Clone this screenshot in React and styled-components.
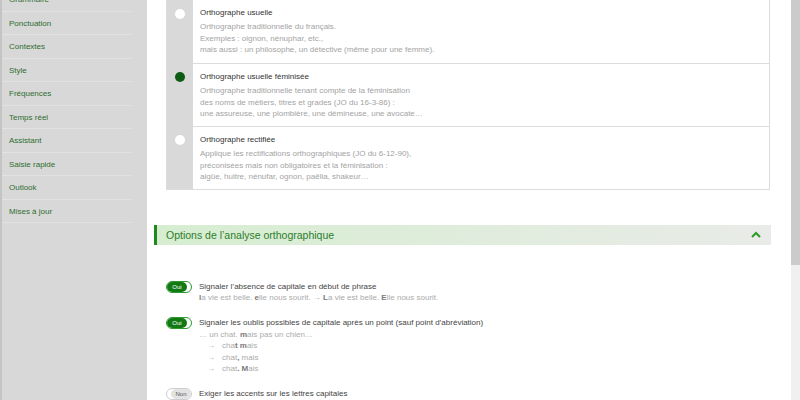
import React from "react";
import styled, { createGlobalStyle } from "styled-components";

const GlobalStyle = createGlobalStyle`
  html, body {
    margin: 0;
    padding: 0;
    background: #fff;
    font-family: "Liberation Sans", Arial, sans-serif;
  }
`;

const menu = [
  "Grammaire",
  "Ponctuation",
  "Contextes",
  "Style",
  "Fréquences",
  "Temps réel",
  "Assistant",
  "Saisie rapide",
  "Outlook",
  "Mises à jour",
];

const choices = [
  {
    title: "Orthographe usuelle",
    lines: [
      "Orthographe traditionnelle du français.",
      "Exemples : oignon, nénuphar, etc.,",
      "mais aussi : un philosophe, un détective (même pour une femme).",
    ],
  },
  {
    title: "Orthographe usuelle féminisée",
    checked: true,
    lines: [
      "Orthographe traditionnelle tenant compte de la féminisation",
      "des noms de métiers, titres et grades (JO du 16-3-86) :",
      "une assureuse, une plombière, une démineuse, une avocate…",
    ],
  },
  {
    title: "Orthographe rectifiée",
    lines: [
      "Applique les rectifications orthographiques (JO du 6-12-90),",
      "préconisées mais non obligatoires et la féminisation :",
      "aigüe, huitre, nénufar, ognon, paëlia, shakeur…",
    ],
  },
];

const Page = styled.div`
  display: flex;
  width: 800px;
  height: 400px;
  overflow: hidden;
`;

const Sidebar = styled.nav`
  width: 147px;
  flex-shrink: 0;
  background: #d8d8d8;
  border-left: 2px solid #c4c4c4;
  box-sizing: border-box;
  margin-top: -12px;
`;

const MenuItem = styled.div`
  height: 23.5px;
  line-height: 23.5px;
  padding-left: 7px;
  margin-right: 16px;
  font-size: 8px;
  color: #2f6d2f;
  border-bottom: 1px solid #e2e2e2;
  box-sizing: border-box;
`;

const Main = styled.main`
  flex: 1;
  display: flex;
  flex-direction: column;
`;

const Card = styled.div`
  margin: -1px 21px 0 19px;
  border: 1px solid #dcdcdc;
  display: flex;
  flex-direction: column;
`;

const ChoiceRow = styled.div`
  display: flex;
  height: 63px;
`;

const RadioCell = styled.div`
  width: 26px;
  flex-shrink: 0;
  background: #d9d9d9;
  display: flex;
  justify-content: center;
  padding-top: 9px;
  box-sizing: border-box;
`;

const Radio = styled.span`
  width: 10px;
  height: 10px;
  border-radius: 50%;
  background: ${(p) => (p.checked ? "#0d5c12" : "#fff")};
`;

const ChoiceText = styled.div`
  flex: 1;
  padding: 7px 0 0 7px;
  border-top: ${(p) => (p.first ? "none" : "1px solid #dcdcdc")};
  font-size: 8px;
  line-height: 11.5px;
`;

const ChoiceTitle = styled.div`
  color: #333;
  margin-bottom: 2.5px;
`;

const Muted = styled.div`
  color: #a3a3a3;
`;

const SectionHeader = styled.div`
  margin: 35px 20px 0 7px;
  height: 22px;
  display: flex;
  align-items: center;
  justify-content: space-between;
  padding: 0 10px 0 9px;
  border-left: 3px solid #1c8a1c;
  background: linear-gradient(to right, #d6edd0, #e9ebe8);
  color: #2b7d2b;
  font-size: 10.5px;
`;

const OptionList = styled.div`
  margin: 36px 0 0 19px;
  display: flex;
  flex-direction: column;
  gap: 13.5px;
`;

const Option = styled.div`
  display: flex;
  align-items: flex-start;
  gap: 7px;
  font-size: 8px;
  line-height: 11.5px;
`;

const Toggle = styled.span`
  width: 26px;
  height: 12px;
  flex-shrink: 0;
  box-sizing: border-box;
  border-radius: 6px;
  display: flex;
  flex-direction: ${(p) => (p.on ? "row" : "row-reverse")};
  background: #fff;
  border: 1px solid ${(p) => (p.on ? "#2f9a2f" : "#cfcfcf")};
`;

const ToggleLabel = styled.span`
  width: 20px;
  border-radius: 6px;
  background: ${(p) => (p.on ? "#137a13" : "#e3e3e3")};
  color: ${(p) => (p.on ? "#fff" : "#555")};
  font-size: 6px;
  line-height: 10px;
  text-align: center;
`;

const OptionTitle = styled.div`
  color: #444;
`;

const Sub = styled.div`
  color: #ababab;
  padding-left: ${(p) => p.indent || 0}px;
  b {
    color: #7a7a7a;
    font-weight: bold;
  }
`;

const Arrow = styled.span`
  display: inline-block;
  width: 15px;
  color: #b5b5b5;
`;

const Scrollbar = styled.div`
  width: 9px;
  flex-shrink: 0;
  background: #f0f0f0;
`;

const Thumb = styled.div`
  height: 265px;
  background: #cbcbcb;
`;

function Chevron() {
  return (
    <svg width="10" height="7" viewBox="0 0 10 7">
      <polyline points="1,6 5,2 9,6" fill="none" stroke="#2a9a2a" strokeWidth="2" />
    </svg>
  );
}

export default function App() {
  return (
    <Page>
      <GlobalStyle />
      <Sidebar>
        {menu.map((m) => (
          <MenuItem key={m}>{m}</MenuItem>
        ))}
      </Sidebar>
      <Main>
        <Card>
          {choices.map((c, i) => (
            <ChoiceRow key={c.title}>
              <RadioCell>
                <Radio checked={c.checked} />
              </RadioCell>
              <ChoiceText first={i === 0}>
                <ChoiceTitle>{c.title}</ChoiceTitle>
                {c.lines.map((l) => (
                  <Muted key={l}>{l}</Muted>
                ))}
              </ChoiceText>
            </ChoiceRow>
          ))}
        </Card>

        <SectionHeader>
          <span>Options de l’analyse orthographique</span>
          <Chevron />
        </SectionHeader>

        <OptionList>
          <Option>
            <Toggle on>
              <ToggleLabel on>Oui</ToggleLabel>
            </Toggle>
            <div>
              <OptionTitle>Signaler l’absence de capitale en début de phrase</OptionTitle>
              <Sub>
                <b>l</b>a vie est belle. <b>e</b>lle nous sourit. → <b>L</b>a vie est belle. <b>E</b>lle nous sourit.
              </Sub>
            </div>
          </Option>
          <Option>
            <Toggle on>
              <ToggleLabel on>Oui</ToggleLabel>
            </Toggle>
            <div>
              <OptionTitle>
                Signaler les oublis possibles de capitale après un point (sauf point d’abréviation)
              </OptionTitle>
              <Sub>… un chat. <b>m</b>ais pas un chien…</Sub>
              <Sub indent={8}>
                <Arrow>→</Arrow>cha<b>t m</b>ais
              </Sub>
              <Sub indent={8}>
                <Arrow>→</Arrow>chat<b>,</b> mais
              </Sub>
              <Sub indent={8}>
                <Arrow>→</Arrow>chat<b>. M</b>ais
              </Sub>
            </div>
          </Option>
          <Option>
            <Toggle>
              <ToggleLabel>Non</ToggleLabel>
            </Toggle>
            <div>
              <OptionTitle>Exiger les accents sur les lettres capitales</OptionTitle>
            </div>
          </Option>
        </OptionList>
      </Main>
      <Scrollbar>
        <Thumb />
      </Scrollbar>
    </Page>
  );
}
